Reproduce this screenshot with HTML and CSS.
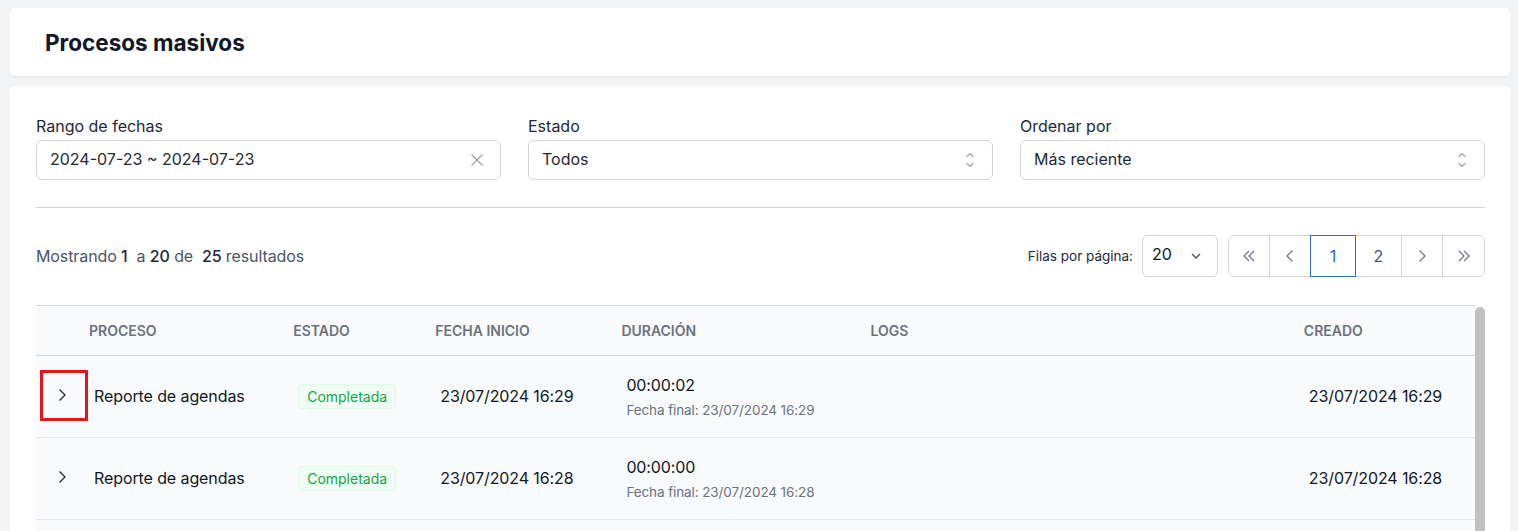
FILE: index.html
```html
<!DOCTYPE html>
<html lang="es">
<head>
<meta charset="utf-8">
<title>Procesos masivos</title>
<link rel="stylesheet" href="styles.css">
</head>
<body>
<div class="page">
  <header class="card title-card">
    <h1 class="title">Procesos masivos</h1>
  </header>

  <section class="card main-card">
    <div class="filters">
      <div class="field">
        <label class="label">Rango de fechas</label>
        <div class="input">
          <span>2024-07-23 ~ 2024-07-23</span>
          <svg class="ico-x" width="14" height="14" viewBox="0 0 14 14"><path d="M1.5 1.5 L12.5 12.5 M12.5 1.5 L1.5 12.5" stroke="#9ca3af" stroke-width="1.2" fill="none"/></svg>
        </div>
      </div>
      <div class="field">
        <label class="label">Estado</label>
        <div class="input">
          <span>Todos</span>
          <svg class="ico-sel" width="10" height="18" viewBox="0 0 10 18"><path d="M1.5 6 L5 2.5 L8.5 6 M1.5 12 L5 15.5 L8.5 12" stroke="#9ca3af" stroke-width="1.2" fill="none"/></svg>
        </div>
      </div>
      <div class="field">
        <label class="label">Ordenar por</label>
        <div class="input">
          <span>Más reciente</span>
          <svg class="ico-sel" width="10" height="18" viewBox="0 0 10 18"><path d="M1.5 6 L5 2.5 L8.5 6 M1.5 12 L5 15.5 L8.5 12" stroke="#9ca3af" stroke-width="1.2" fill="none"/></svg>
        </div>
      </div>
    </div>

    <hr class="divider">

    <div class="toolbar">
      <p class="summary">Mostrando <b>1</b>&nbsp; a <b>20</b> de&nbsp; <b>25</b> resultados</p>
      <div class="pager-area">
        <span class="rows-label">Filas por página:</span>
        <div class="rows-select">
          <span>20</span>
          <svg width="12" height="8" viewBox="0 0 12 8"><path d="M2 2 L6 6 L10 2" stroke="#4b5563" stroke-width="1.4" fill="none"/></svg>
        </div>
        <nav class="pager">
          <span class="pg pg-icon"><svg width="16" height="16" viewBox="0 0 16 16"><path d="M8 3 L3 8 L8 13 M13 3 L8 8 L13 13" stroke="#6b7280" stroke-width="1.2" fill="none"/></svg></span>
          <span class="pg pg-icon"><svg width="16" height="16" viewBox="0 0 16 16"><path d="M10.5 2.5 L5 8 L10.5 13.5" stroke="#6b7280" stroke-width="1.2" fill="none"/></svg></span>
          <span class="pg pg-num active">1</span>
          <span class="pg pg-num">2</span>
          <span class="pg pg-icon"><svg width="16" height="16" viewBox="0 0 16 16"><path d="M5.5 2.5 L11 8 L5.5 13.5" stroke="#6b7280" stroke-width="1.2" fill="none"/></svg></span>
          <span class="pg pg-icon last"><svg width="16" height="16" viewBox="0 0 16 16"><path d="M3 3 L8 8 L3 13 M8 3 L13 8 L8 13" stroke="#6b7280" stroke-width="1.2" fill="none"/></svg></span>
        </nav>
      </div>
    </div>

    <div class="table-wrap">
      <div class="table-area">
        <table class="grid">
          <colgroup>
            <col class="c-exp"><col class="c-proc"><col class="c-est"><col class="c-ini"><col class="c-dur"><col class="c-logs"><col class="c-cre">
          </colgroup>
          <thead>
            <tr>
              <th></th><th>Proceso</th><th>Estado</th><th>Fecha inicio</th><th>Duración</th><th>Logs</th><th>Creado</th>
            </tr>
          </thead>
          <tbody>
            <tr>
              <td class="exp"><span class="exp-wrap"><svg width="12" height="14" viewBox="0 0 12 14"><path d="M3.5 1.5 L9 7 L3.5 12.5" stroke="#1f2937" stroke-width="1.3" fill="none"/></svg><span class="mark"></span></span></td>
              <td>Reporte de agendas</td>
              <td><span class="badge">Completada</span></td>
              <td>23/07/2024 16:29</td>
              <td><div class="dur">00:00:02</div><div class="sub">Fecha final: 23/07/2024 16:29</div></td>
              <td></td>
              <td>23/07/2024 16:29</td>
            </tr>
            <tr>
              <td class="exp"><span class="exp-wrap"><svg width="12" height="14" viewBox="0 0 12 14"><path d="M3.5 1.5 L9 7 L3.5 12.5" stroke="#1f2937" stroke-width="1.3" fill="none"/></svg></span></td>
              <td>Reporte de agendas</td>
              <td><span class="badge">Completada</span></td>
              <td>23/07/2024 16:28</td>
              <td><div class="dur">00:00:00</div><div class="sub">Fecha final: 23/07/2024 16:28</div></td>
              <td></td>
              <td>23/07/2024 16:28</td>
            </tr>
          </tbody>
        </table>
      </div>
      <div class="scrollbar"><div class="thumb"></div></div>
    </div>
  </section>
</div>
</body>
</html>
```

FILE: styles.css
```css
* { box-sizing: border-box; }

html, body {
  margin: 0;
  height: 100%;
  overflow: hidden;
}

body {
  background: #f3f4f6;
  font-family: Inter, "Noto Sans", "Liberation Sans", sans-serif;
  color: #1f2937;
}

.page {
  padding: 8px 7px 0 9px;
  display: flex;
  flex-direction: column;
  gap: 10px;
}

.card {
  background: #ffffff;
  border-radius: 6px;
  box-shadow: 0 1px 3px rgba(0, 0, 0, 0.08);
}

.title-card {
  height: 68px;
  display: flex;
  align-items: center;
  padding-left: 36px;
}

.title {
  margin: 0;
  font-size: 22.5px;
  font-weight: 700;
  color: #111827;
  padding-top: 1px;
}

.main-card {
  padding: 30px 26px 0 27px;
}

.filters {
  display: grid;
  grid-template-columns: repeat(3, 1fr);
  gap: 27px;
}

.field {
  display: flex;
  flex-direction: column;
  gap: 4px;
}

.label {
  font-size: 16px;
  line-height: 20px;
  color: #1f2937;
}

.input {
  height: 40px;
  border: 1px solid #d1d5db;
  border-radius: 6px;
  display: flex;
  align-items: center;
  justify-content: space-between;
  padding: 0 17px 0 13px;
  font-size: 16px;
  color: #1f2937;
}

.input span { margin-top: -2px; }

.ico-x { margin-right: -1px; }

.divider {
  border: 0;
  border-top: 1px solid #d1d5db;
  margin: 27px 0 0 0;
}

.toolbar {
  margin-top: 27px;
  display: flex;
  align-items: center;
  justify-content: space-between;
  height: 42px;
}

.summary {
  margin: 0;
  font-size: 16px;
  color: #4b5563;
  letter-spacing: -0.1px;
}

.summary b {
  font-weight: 500;
  color: #1f2937;
}

.pager-area {
  display: flex;
  align-items: center;
}

.rows-label {
  font-size: 13.5px;
  color: #1f2937;
  margin-right: 9px;
}

.rows-select {
  width: 76px;
  height: 42px;
  border: 1px solid #d1d5db;
  border-radius: 6px;
  display: flex;
  align-items: center;
  justify-content: space-between;
  padding: 0 15px 0 9px;
  font-size: 16px;
  color: #111827;
  margin-right: 10px;
}

.rows-select span { margin-top: -4px; }

.pager {
  display: flex;
  height: 42px;
  border: 1px solid #d1d5db;
  border-radius: 6px;
}

.pg {
  display: flex;
  align-items: center;
  justify-content: center;
  border-right: 1px solid #d1d5db;
  font-size: 16px;
  color: #4b5563;
}

.pg.last { border-right: 0; }

.pg-icon { width: 41px; }
.pg-num { width: 46px; }

.pg.active {
  color: #2563eb;
  border: 1px solid #2f6bc9;
  margin: -1px 0 -1px -1px;
}

.table-wrap {
  margin-top: 28px;
  display: flex;
}

.table-area {
  flex: 1;
  background: #f9fafb;
  border-top: 1px solid #d1d5db;
}

.scrollbar {
  width: 10px;
  padding-top: 2px;
}

.thumb {
  height: 400px;
  background: #c1c1c1;
  border-radius: 5px;
}

.grid {
  width: 100%;
  table-layout: fixed;
  border-collapse: collapse;
}

.c-exp { width: 41px; }
.c-proc { width: 204px; }
.c-est { width: 142px; }
.c-ini { width: 186px; }
.c-dur { width: 249px; }
.c-logs { width: 433px; }
.c-cre { width: 183px; }

.grid th {
  height: 49px;
  text-align: left;
  padding: 0 0 0 12px;
  font-size: 14px;
  font-weight: 600;
  color: #6b7280;
  text-transform: uppercase;
  border-bottom: 1px solid #d1d5db;
}

.grid td {
  height: 82px;
  padding: 0 0 0 17px;
  font-size: 16px;
  color: #111827;
  border-bottom: 1px solid #e5e7eb;
  vertical-align: middle;
  letter-spacing: -0.1px;
}

.grid td.exp {
  padding: 0 0 0 20px;
}

.exp-wrap {
  position: relative;
  display: inline-flex;
}

.mark {
  position: absolute;
  left: -16px;
  top: -18px;
  width: 48px;
  height: 51px;
  border: 3px solid #e3161b;
}

.badge {
  display: inline-block;
  height: 25px;
  line-height: 23px;
  padding: 0 8px;
  font-size: 14px;
  letter-spacing: 0;
  color: #16a34a;
  background: #f0fdf4;
  border: 1px solid #dcfce7;
  border-radius: 4px;
}

.dur {
  line-height: 22px;
  font-size: 16px;
  color: #111827;
}

.sub {
  margin-top: 5px;
  line-height: 18px;
  font-size: 13.5px;
  color: #6b7280;
}
```
